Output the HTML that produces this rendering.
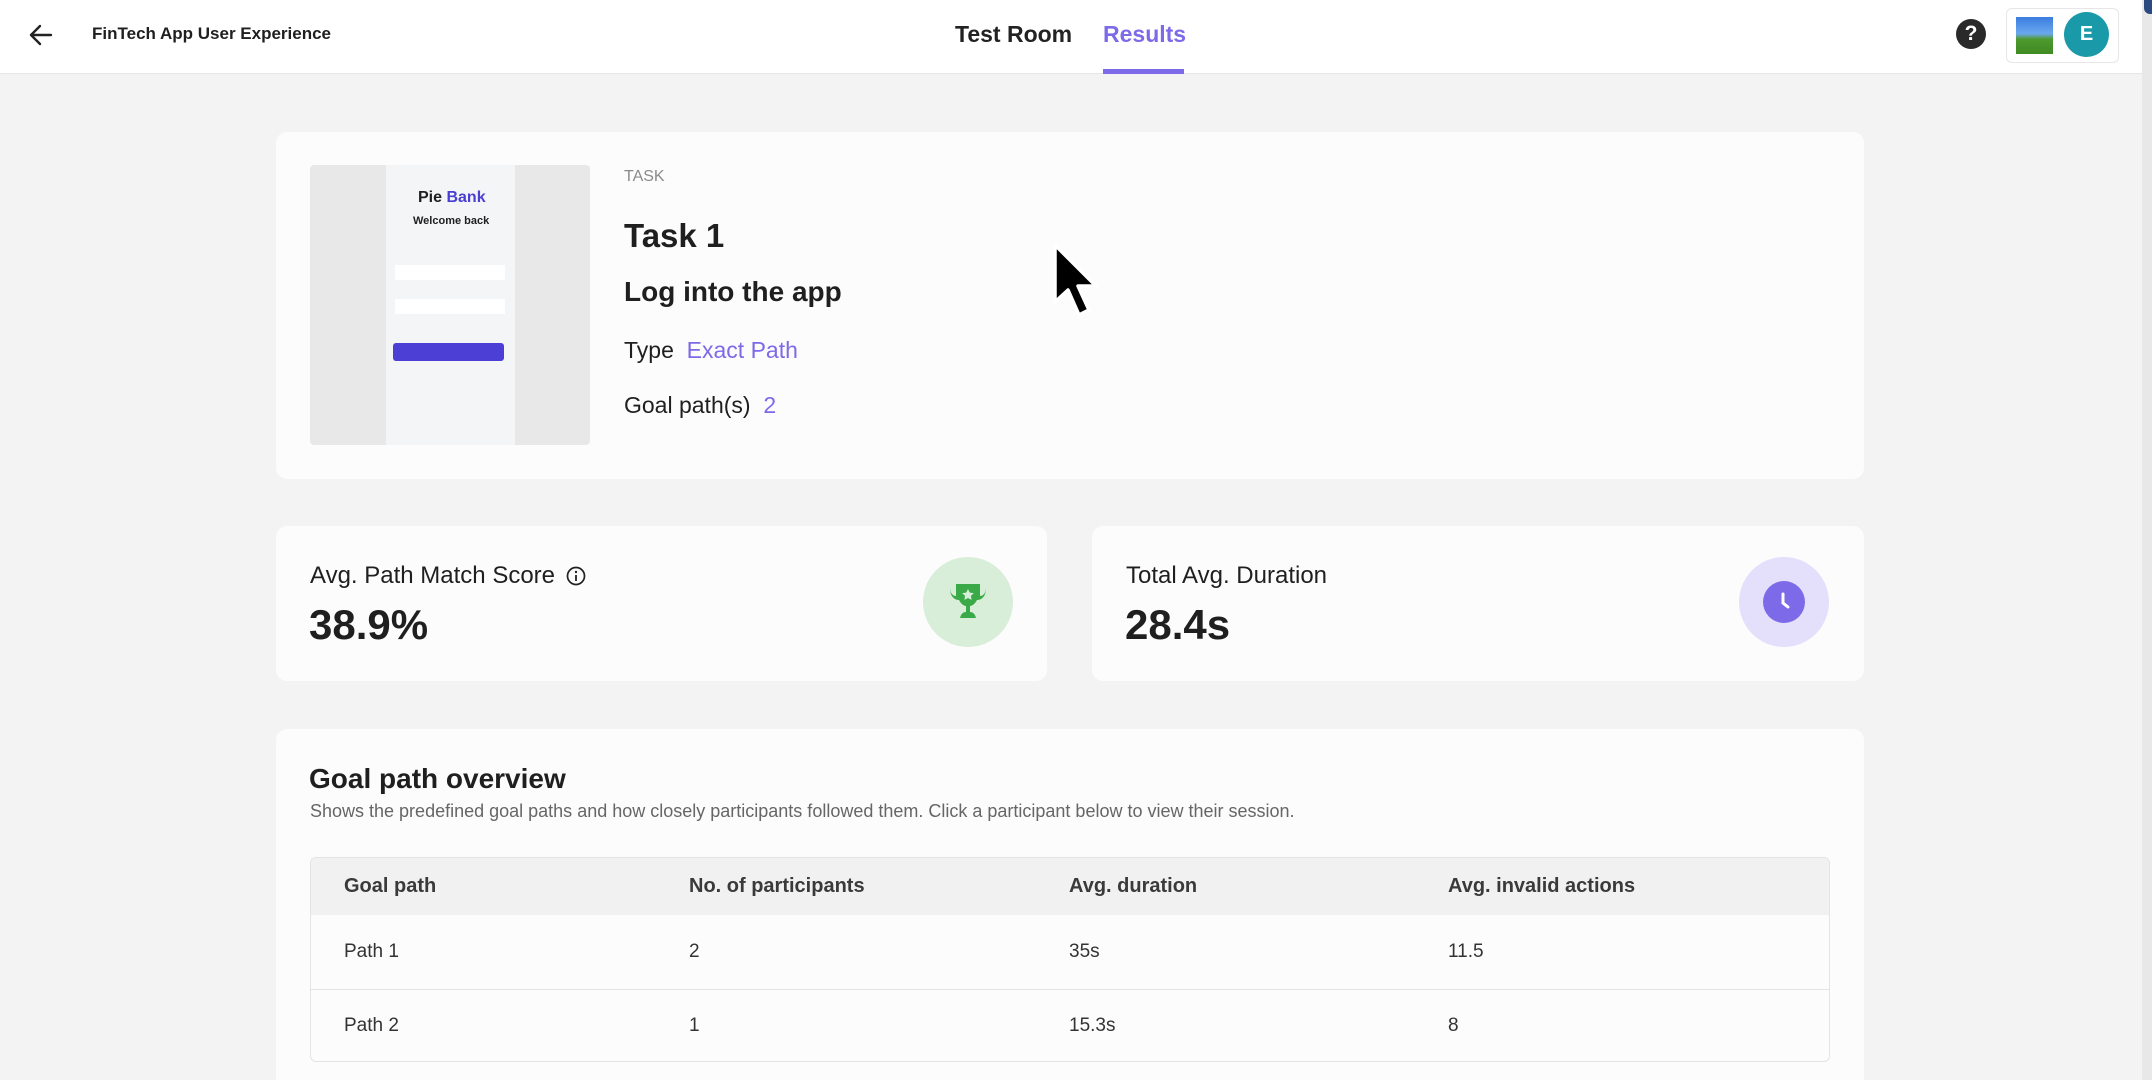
<!DOCTYPE html>
<html><head><meta charset="utf-8">
<style>
*{box-sizing:border-box;margin:0;padding:0}
html,body{width:2152px;height:1080px;overflow:hidden}
body{background:#f3f3f3;font-family:"Liberation Sans",sans-serif;color:#1f1f1f;position:relative}
.abs{position:absolute}
.hdr{left:0;top:0;width:2142px;height:74px;background:#fff;border-bottom:1px solid #e6e6e6}
.card{background:#fcfcfc;border-radius:11px}
.t{position:absolute;white-space:nowrap}
</style></head><body>
<div class="abs hdr"></div>
<div class="abs" style="left:2142px;top:0;width:10px;height:1080px;background:#e8e8e8"></div>
<div class="abs" style="left:2144px;top:0;width:8px;height:14px;background:#2b4a80;border-radius:0 0 0 6px"></div>
<svg class="abs" style="left:28px;top:22px" width="26" height="26" viewBox="0 0 26 26"><path d="M23 13H4M12 4L3 13l9 9" stroke="#222" stroke-width="2.4" fill="none" stroke-linecap="round" stroke-linejoin="round"/></svg>
<div class="t" style="left:92px;top:24px;font-size:17px;font-weight:bold;color:#1f1f1f">FinTech App User Experience</div>
<div class="t" style="left:955px;top:21px;font-size:23px;font-weight:bold;color:#222">Test Room</div>
<div class="t" style="left:1103px;top:21px;font-size:23px;font-weight:bold;color:#7d6ae8">Results</div>
<div class="abs" style="left:1103px;top:69px;width:81px;height:5px;background:#7d6ae8"></div>
<div class="abs" style="left:1956px;top:19px;width:30px;height:30px;border-radius:50%;background:#2a2a2a;color:#fff;font-weight:bold;font-size:21px;text-align:center;line-height:30px">?</div>
<div class="abs" style="left:2006px;top:8px;width:113px;height:55px;border:1px solid #e6e6e6;border-radius:6px;background:#fff"></div>
<div class="abs" style="left:2016px;top:17px;width:37px;height:37px;background:linear-gradient(#3b7de0 0%,#6aa8ee 45%,#4f9a2e 60%,#3f8a22 100%)"></div>
<div class="abs" style="left:2064px;top:12px;width:45px;height:45px;border-radius:50%;background:#1a9aa8;color:#fff;font-weight:bold;font-size:20px;text-align:center;line-height:45px">E</div>

<div class="abs card" style="left:276px;top:132px;width:1588px;height:347px"></div>
<div class="abs" style="left:310px;top:165px;width:280px;height:280px;background:#e8e8e8;border-radius:4px"></div>
<div class="abs" style="left:386px;top:165px;width:129px;height:280px;background:#f4f5f7"></div>
<div class="t" style="left:418px;top:189px;font-size:16px;font-weight:bold">Pie <span style="color:#4a3fd0">Bank</span></div>
<div class="t" style="left:413px;top:215px;font-size:11px;font-weight:bold">Welcome back</div>
<div class="abs" style="left:395px;top:265px;width:110px;height:15px;background:#fff"></div>
<div class="abs" style="left:395px;top:299px;width:110px;height:15px;background:#fff"></div>
<div class="abs" style="left:393px;top:343px;width:111px;height:18px;background:#4b3fd6;border-radius:3px"></div>

<div class="t" style="left:624px;top:168px;font-size:16px;color:#8a8a8a">TASK</div>
<div class="t" style="left:624px;top:217px;font-size:33px;font-weight:bold;color:#1f1f1f">Task 1</div>
<div class="t" style="left:624px;top:276px;font-size:28px;font-weight:bold;color:#1f1f1f">Log into the app</div>
<div class="t" style="left:624px;top:337px;font-size:23px">Type&nbsp;&nbsp;<span style="color:#7d6ae8">Exact Path</span></div>
<div class="t" style="left:624px;top:392px;font-size:23px">Goal path(s)&nbsp;&nbsp;<span style="color:#7d6ae8">2</span></div>

<svg class="abs" style="left:1050px;top:240px" width="55" height="85" viewBox="0 0 55 85"><path d="M5 5V62L18 50L29 75L39 70L28 46H46Z" fill="#000" stroke="#fff" stroke-width="3.5" stroke-linejoin="round"/></svg>

<div class="abs card" style="left:276px;top:526px;width:771px;height:155px"></div>
<div class="abs card" style="left:1092px;top:526px;width:772px;height:155px"></div>
<div class="t" style="left:310px;top:562px;font-size:24px">Avg. Path Match Score</div>
<svg class="abs" style="left:566px;top:566px" width="20" height="20" viewBox="0 0 20 20"><circle cx="10" cy="10" r="8.5" fill="none" stroke="#222" stroke-width="1.7"/><circle cx="10" cy="6" r="1.2" fill="#222"/><path d="M10 9v6" stroke="#222" stroke-width="1.8"/></svg>
<div class="t" style="left:309px;top:601px;font-size:42px;font-weight:bold">38.9%</div>
<div class="abs" style="left:923px;top:557px;width:90px;height:90px;border-radius:50%;background:#d8eed9"></div>
<svg class="abs" style="left:944px;top:578px" width="48" height="48" viewBox="0 0 48 48"><path d="M12 6h24v4h6c0 8-4 12-9 12-2 4-5 6-7 6v6c3 0 5 2 6 6H16c1-4 3-6 6-6v-6c-2 0-5-2-7-6-5 0-9-4-9-12h6z" fill="#3aaa48"/><path d="M6 10h6v8c-3 0-6-3-6-8zM42 10h-6v8c3 0 6-3 6-8z" fill="#d8eed9"/><path d="M24 11l1.8 3.6 4 .5-2.9 2.8.7 4-3.6-1.9-3.6 1.9.7-4-2.9-2.8 4-.5z" fill="#d8eed9"/></svg>
<div class="t" style="left:1126px;top:562px;font-size:24px">Total Avg. Duration</div>
<div class="t" style="left:1125px;top:601px;font-size:42px;font-weight:bold">28.4s</div>
<div class="abs" style="left:1739px;top:557px;width:90px;height:90px;border-radius:50%;background:#e4e0fb"></div>
<svg class="abs" style="left:1763px;top:581px" width="42" height="42" viewBox="0 0 42 42"><circle cx="21" cy="21" r="21" fill="#7d6ae8"/><path d="M20 13v9l5 4" stroke="#fff" stroke-width="3" fill="none" stroke-linecap="round"/></svg>

<div class="abs card" style="left:276px;top:729px;width:1588px;height:380px"></div>
<div class="t" style="left:309px;top:763px;font-size:28px;font-weight:bold">Goal path overview</div>
<div class="t" style="left:310px;top:801px;font-size:18px;color:#666">Shows the predefined goal paths and how closely participants followed them. Click a participant below to view their session.</div>
<div class="abs" style="left:310px;top:857px;width:1520px;height:205px;border:1px solid #e4e4e4;border-radius:6px;overflow:hidden;background:#fcfcfc">
<div style="height:57px;background:#f1f1f1"></div>
<div style="position:absolute;left:0;top:131px;width:100%;height:1px;background:#e4e4e4"></div>
</div>
<div class="t" style="left:344px;top:875px;font-size:20px;font-weight:bold;color:#3a3a3a">Goal path</div>
<div class="t" style="left:689px;top:875px;font-size:20px;font-weight:bold;color:#3a3a3a">No. of participants</div>
<div class="t" style="left:1069px;top:875px;font-size:20px;font-weight:bold;color:#3a3a3a">Avg. duration</div>
<div class="t" style="left:1448px;top:875px;font-size:20px;font-weight:bold;color:#3a3a3a">Avg. invalid actions</div>
<div class="t" style="left:344px;top:941px;font-size:19px;color:#333">Path 1</div>
<div class="t" style="left:689px;top:941px;font-size:19px;color:#333">2</div>
<div class="t" style="left:1069px;top:941px;font-size:19px;color:#333">35s</div>
<div class="t" style="left:1448px;top:941px;font-size:19px;color:#333">11.5</div>
<div class="t" style="left:344px;top:1015px;font-size:19px;color:#333">Path 2</div>
<div class="t" style="left:689px;top:1015px;font-size:19px;color:#333">1</div>
<div class="t" style="left:1069px;top:1015px;font-size:19px;color:#333">15.3s</div>
<div class="t" style="left:1448px;top:1015px;font-size:19px;color:#333">8</div>
</body></html>
